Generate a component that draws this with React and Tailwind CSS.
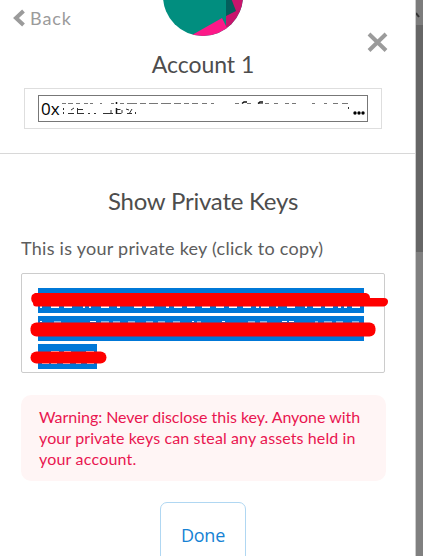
import React from "react";

function Avatar() {
  return (
    <svg className="block h-[37px] w-[82px]" viewBox="0 0 82 37">
      <defs>
        <clipPath id="disc">
          <circle cx="41" cy="-4" r="40" />
        </clipPath>
      </defs>
      <g clipPath="url(#disc)">
        <rect width="82" height="37" fill="#018e7f" />
        <path d="M64 -5H82V37H64Z" fill="#c8146c" />
        <path d="M64 -2H69L74 11L64 16Z" fill="#035e5c" />
        <path d="M30 35L60 18L65 28V37H30Z" fill="#fc1988" />
      </g>
    </svg>
  );
}

function AddressMarks() {
  return (
    <svg className="absolute left-[21px] top-0 h-[25px] w-[310px]" viewBox="59 96 310 25" fill="none">
      <path
        d="M61 103.5h4M67 103.5h5M75 103.5h4M83 103.5h4M89 103.5h3M99 103.5h2M110 103.5h3M119 103.5h4M126 103.5h10M139 103.5h6M148 103.5h9M160 103.5h10M173 103.5h7M183 103.5h5M191 103.5h6M201 103.5h5M210 103.5h3M234 103.5h4M246 103.5h4M257 103.5h5M264 103.5h4M273 103.5h4M284 103.5h4M291 103.5h4M311 103.5h3M323 103.5h3M332 103.5h5M341 103.5h6"
        stroke="#777"
      />
      <path d="M241 103.5l2-1.500h3M257 103.500l2-1.500h3M115.500 102v2M115.500 108v6" stroke="#111" strokeWidth="1.500" />
      <path
        d="M62.500 108v2M62.500 112v2M67 113.500h6M70 110l3-2M76 113.500h7M76.500 108v6M77 109.500h5M87 113.500h2M93 113.500h2M102 113.500h10M110 110v3M115.500 109.500h4M115.500 113.500h5M121 110v3M125 109l3 1M126 113.500h5M131 109l-3 5M134.500 112v2M347.500 107v2"
        stroke="#333"
      />
    </svg>
  );
}

function Redaction() {
  return (
    <svg className="absolute left-[8px] top-[14px] h-[84px] w-[360px]" viewBox="30 288 360 84" fill="none">
      <path d="M38 288H364V313H38ZM38 316H364V341H38ZM38 344H97V369H38Z" fill="#0078d7" />
      <path
        d="M40 307h2M51 307h8M64 307h8M83 307h2M89 307h2M101 307h8M117 307h3M134 307h8M146 307h8M166 307h3M174 307h8M187 307h8M202 307h8M216 307h8M229 307h8M243 307h8M256 307h3M261 307h8M276 307h2M287 307h8M305 307h2M313 307h8M325 307h8M338 307h3M344 307h3M352 307h8"
        stroke="#fff"
        strokeWidth="2"
      />
      <path
        d="M57 293.500h3M69 293.500h2M300 293.500h5M336 293.500h3M40 321.500h2M54 322h7M90 321.500h6M101 322h8M113 322h7M128 322h7M146 322h7M158 322h7M173 322h7M192 321.500h2M197 322h4M222 321.500h3M248 322h7M260 322h7M282 321.500h5M289 321.500h5M315 322h3M324 322h8M336 322h7M352 322h7M51 351.500h8M64 351.500h7M86 351.500h8M42 363.500h7M51 363.500h6M63 363.500h7M76 363.500h5M87 363.500h7"
        stroke="#fff"
      />
      <g fill="#f00">
        <path d="M35 293H366Q370 294 370 298H384Q388 298 388 301.500T384 306.500H37Q33 307 33 303Q30 300 32 295Z" />
        <rect x="30.500" y="322.500" width="345" height="14" rx="6" />
        <rect x="30.500" y="351.500" width="76" height="12" rx="6" />
      </g>
    </svg>
  );
}

export default function App() {
  return (
    <div className="flex h-[556px] w-[423px] overflow-hidden bg-[#808080] font-['Lato',sans-serif] text-[#4d4d4d]">
      <main className="w-[416px] shrink-0 overflow-hidden border-r border-[#ccc] bg-white">
        <section className="relative h-[154px] border-b border-[#d8d8d8]">
          <div className="flex justify-center pr-[9px]">
            <Avatar />
          </div>
          <button className="absolute left-[13px] top-[6px] flex h-6 items-center gap-[4px] text-[18px] text-[#9b9b9b]">
            <svg className="h-[18px] w-[12px]" viewBox="0 0 12 18" fill="none" stroke="#9b9b9b" strokeWidth="4">
              <path d="M10.500 2L3 9L10.500 16" />
            </svg>
            <span className="ml-px tracking-[0.9px]">Back</span>
          </button>
          <button className="absolute left-[367px] top-[32px]" aria-label="Close">
            <svg className="block h-[20px] w-[21px]" viewBox="0 0 21 20" stroke="#9b9b9b" strokeWidth="4">
              <path d="M2 2L19 18.500M19 2L2 18.500" />
            </svg>
          </button>
          <h1 className="mt-[11px] h-8 pr-[9px] text-center text-[23px] leading-8 tracking-[-0.05px]">Account 1</h1>
          <div className="ml-[24px] mt-[8px] h-[41px] w-[358px] border border-[#dedede] px-[13px] py-[6px]">
            <div className="relative flex h-[27px] w-[330px] items-center justify-between border border-[#777] pl-[2px] pr-[2px] text-black">
              <span className="font-['Open_Sans',sans-serif] text-[17px] leading-6">0x</span>
              <AddressMarks />
              <svg className="mt-[9px] h-1 w-3" viewBox="0 0 12 4">
                <circle cx="2" cy="2" r="1.700" />
                <circle cx="6" cy="2" r="1.700" />
                <circle cx="10" cy="2" r="1.700" />
              </svg>
            </div>
          </div>
        </section>
        <section className="pl-[21px]">
          <h2 className="mt-[31px] h-8 w-[364px] text-center text-[24px] leading-8 tracking-[-0.22px]">
            Show Private Keys
          </h2>
          <p className="mt-[19px] h-6 whitespace-nowrap text-[18px] leading-6 tracking-[0.27px] text-[#5d5d5d]">
            This is your private key (click to copy)
          </p>
          <div className="relative mt-[13px] h-[100px] w-[364px] rounded-[2px] border border-[#ccc]">
            <Redaction />
          </div>
          <div className="mt-[22px] h-[86px] w-[365px] whitespace-nowrap rounded-[10px] bg-[#fff5f5] px-[18px] py-[11px] text-[16px] leading-[21px] text-[#e91550]">
            <p className="tracking-[-0.04px]">Warning: Never disclose this key. Anyone with</p>
            <p className="tracking-[0.11px]">your private keys can steal any assets held in</p>
            <p className="tracking-[0.2px]">your account.</p>
          </div>
          <div className="flex w-[364px] justify-center pt-[21px]">
            <button className="h-[67px] w-[86px] rounded-[7px] border border-[#b0d7f2] font-['Open_Sans',sans-serif] text-[18px] tracking-[-0.2px] text-[#1682d4]">
              Done
            </button>
          </div>
        </section>
      </main>
      <aside className="flex w-[7px] flex-col">
        <div className="h-[25px] bg-[#7c7c7c]">
          <svg className="block h-[25px] w-[7px]" viewBox="0 0 7 25" fill="none" stroke="#333" strokeWidth="2">
            <path d="M0 13L3 17" />
          </svg>
        </div>
        <div className="h-[227px] bg-[#666]" />
        <div className="flex-1 bg-[#808080]" />
      </aside>
    </div>
  );
}
